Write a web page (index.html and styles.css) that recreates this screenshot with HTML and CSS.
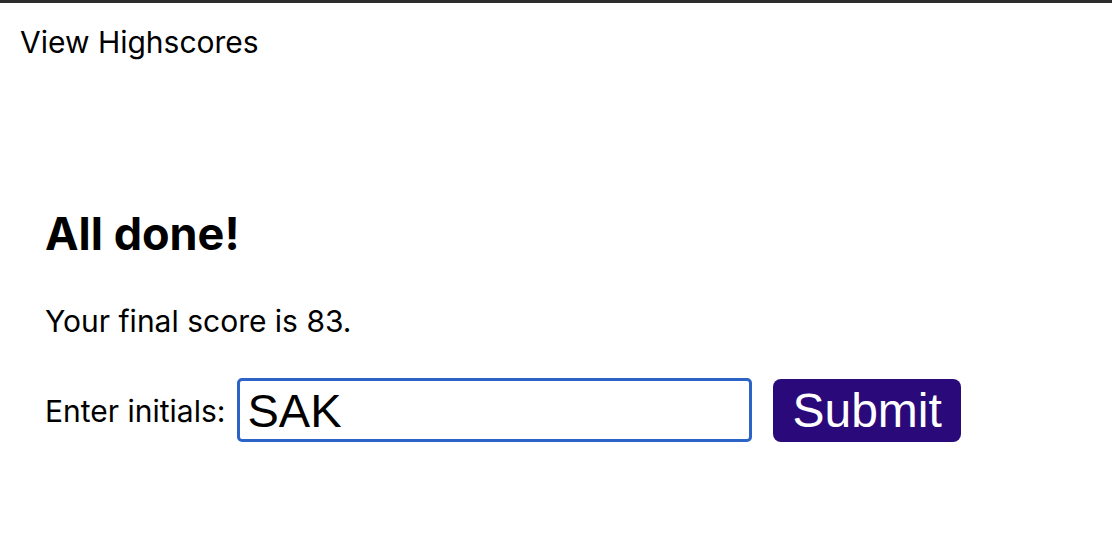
FILE: index.html
```html
<!DOCTYPE html>
<html lang="en">
<head>
<meta charset="utf-8">
<title>Quiz</title>
<link rel="stylesheet" href="styles.css">
</head>
<body>
<header class="topbar">
  <a class="highscores-link" href="#">View Highscores</a>
</header>
<main class="done">
  <h1 class="done-title">All done!</h1>
  <p class="done-score">Your final score is 83.</p>
  <form class="initials-form">
    <label class="initials-label" for="initials">Enter initials:</label>
    <input class="initials-input" id="initials" type="text" value="SAK" autofocus>
    <button class="submit-btn" type="button">Submit</button>
  </form>
</main>
</body>
</html>
```
FILE: styles.css
```css
html, body {
  margin: 0;
  padding: 0;
  background: #fff;
}
body {
  border-top: 3px solid #2d2d2d;
  font-family: Inter, "Noto Sans", sans-serif;
  color: #000;
}
.topbar {
  padding: 21px 20px 0;
  height: 36px;
}
.highscores-link {
  color: #000;
  text-decoration: none;
  font-size: 30px;
  line-height: 36px;
}
.done {
  padding: 147px 45px 0;
}
.done-title {
  margin: 0;
  font-size: 45px;
  font-weight: 700;
  line-height: 54px;
}
.done-score {
  margin: 42px 0 0;
  font-size: 30px;
  line-height: 36px;
}
.initials-form {
  display: flex;
  align-items: center;
  margin-top: 39px;
}
.initials-label {
  font-size: 30px;
  line-height: 36px;
  margin-right: 12px;
  position: relative;
  top: 1px;
}
.initials-input {
  width: 515px;
  height: 64px;
  box-sizing: border-box;
  border: 3px solid #2b63c6;
  border-radius: 5px;
  padding: 0 7px;
  font-family: "Liberation Sans", Arial, sans-serif;
  font-size: 47px;
  color: #000;
  caret-color: #000;
  outline: none;
}
.submit-btn {
  margin-left: 21px;
  height: 63px;
  padding: 0 19px;
  background: #2a0a7a;
  color: #fff;
  border: none;
  border-radius: 8px;
  font-family: "Liberation Sans", Arial, sans-serif;
  font-size: 48px;
}
```
